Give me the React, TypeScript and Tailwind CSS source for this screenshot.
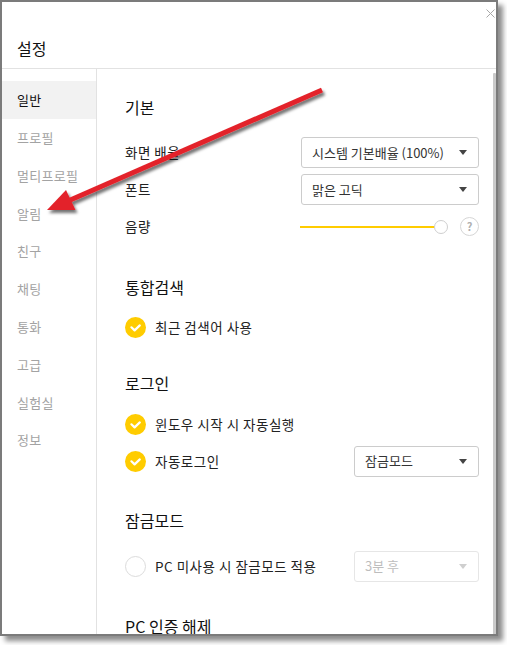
import React from "react";

const menu = ["일반", "프로필", "멀티프로필", "알림", "친구", "채팅", "통화", "고급", "실험실", "정보"];

function Caret({ disabled }: { disabled?: boolean }) {
  return (
    <span
      className={
        disabled
          ? "w-0 h-0 border-l-[4.5px] border-r-[4.5px] border-t-[5px] border-l-transparent border-r-transparent border-t-[#cfcfcf]"
          : "w-0 h-0 border-l-[4.5px] border-r-[4.5px] border-t-[5px] border-l-transparent border-r-transparent border-t-[#444]"
      }
    />
  );
}

function Select({ value, wide, disabled }: { value: string; wide?: boolean; disabled?: boolean }) {
  return (
    <div
      className={[
        "ml-auto h-[31px] flex items-center justify-between rounded-[3px] border pl-[10px] pr-[11px] text-[13px]",
        wide ? "w-[178px]" : "w-[125px]",
        disabled ? "border-[#e6e6e6] text-[#bdbdbd]" : "border-[#cccccc] text-[#333]",
      ].join(" ")}
    >
      <span>{value}</span>
      <Caret disabled={disabled} />
    </div>
  );
}

function Check({ on }: { on: boolean }) {
  if (!on) {
    return <span className="w-[21px] h-[21px] rounded-full border border-[#dcdcdc] bg-white shrink-0" />;
  }
  return (
    <svg width="21" height="21" viewBox="0 0 21 21" className="shrink-0">
      <circle cx="10.5" cy="10.5" r="10.5" fill="#ffcc00" />
      <path
        d="M6.4 10.3 L9.6 13.4 L14.8 8.4"
        stroke="#fff"
        strokeWidth="2.2"
        fill="none"
        strokeLinecap="round"
        strokeLinejoin="round"
      />
    </svg>
  );
}

function CheckRow({ label, on, children }: { label: string; on: boolean; children?: React.ReactNode }) {
  return (
    <div className="h-[37px] flex items-center">
      <Check on={on} />
      <span className="ml-[9px] text-[13.5px] tracking-[0.5px] text-[#222]">{label}</span>
      {children}
    </div>
  );
}

function Heading({ children, className }: { children: React.ReactNode; className: string }) {
  return <div className={`h-[24px] leading-[24px] text-[16px] text-[#111] ${className}`}>{children}</div>;
}

export default function App() {
  return (
    <div
      className="relative w-[507px] h-[645px] bg-white overflow-hidden"
      style={{ fontFamily: '"Noto Sans CJK KR", "Noto Sans", sans-serif' }}
    >
      <div className="w-[498px] h-[636px] border-2 border-[#7b7b7b] bg-white flex flex-col shadow-[5px_5px_5px_rgba(0,0,0,0.45)]">
        {/* Header */}
        <div className="relative h-[67px] shrink-0 border-b border-[#e2e2e2] pl-[15px] pt-[34px]">
          <div className="h-[24px] leading-[24px] text-[16px] text-[#111]">설정</div>
          <svg width="9" height="9" viewBox="0 0 9 9" className="absolute right-[1px] top-[7px]">
            <path d="M0.5 0.5 L8.5 8.5 M8.5 0.5 L0.5 8.5" stroke="#a8a8a8" strokeWidth="1" />
          </svg>
        </div>

        {/* Body */}
        <div className="flex-1 flex min-h-0">
          <div className="w-[95px] shrink-0 border-r border-[#e2e2e2] pt-[12px]">
            {menu.map((m, i) => (
              <div
                key={m}
                className={
                  i === 0
                    ? "h-[37.8px] flex items-center pl-[15px] text-[13px] tracking-[0.3px] bg-[#f2f2f2] text-[#111]"
                    : "h-[37.8px] flex items-center pl-[15px] text-[13px] tracking-[0.3px] text-[#a3a3a3]"
                }
              >
                {m}
              </div>
            ))}
          </div>

          <div className="flex-1 min-w-0 overflow-hidden pl-[28px] pr-[14px]">
            <Heading className="mt-[26px]">기본</Heading>
            <div className="mt-[15px]">
              <div className="h-[37px] flex items-center">
                <span className="text-[13.5px] tracking-[0.5px] text-[#222]">화면 배율</span>
                <Select value="시스템 기본배율 (100%)" wide />
              </div>
              <div className="h-[37px] flex items-center">
                <span className="text-[13.5px] tracking-[0.5px] text-[#222]">폰트</span>
                <Select value="맑은 고딕" wide />
              </div>
              <div className="h-[37px] flex items-center">
                <span className="text-[13.5px] tracking-[0.5px] text-[#222]">음량</span>
                <div className="ml-auto relative w-[148px] h-[14px]">
                  <div className="absolute left-0 right-[8px] top-[6px] h-[2px] bg-[#ffcc00]" />
                  <div className="absolute right-0 top-0 w-[14px] h-[14px] rounded-full border border-[#cfcfcf] bg-white" />
                </div>
                <div className="ml-[12px] w-[19px] h-[19px] rounded-full border border-[#d6d6d6] flex items-center justify-center text-[11px] font-bold text-[#b0b0b0] leading-none">
                  ?
                </div>
              </div>
            </div>

            <Heading className="mt-[30px]">통합검색</Heading>
            <div className="mt-[10px]">
              <CheckRow label="최근 검색어 사용" on />
            </div>

            <Heading className="mt-[25px]">로그인</Heading>
            <div className="mt-[10.5px]">
              <CheckRow label="윈도우 시작 시 자동실행" on />
              <CheckRow label="자동로그인" on>
                <Select value="잠금모드" />
              </CheckRow>
            </div>

            <Heading className="mt-[28.5px]">잠금모드</Heading>
            <div className="mt-[15.5px]">
              <CheckRow label="PC 미사용 시 잠금모드 적용" on={false}>
                <Select value="3분 후" disabled />
              </CheckRow>
            </div>

            <Heading className="mt-[29.5px]">PC 인증 해제</Heading>
          </div>

          {/* Scrollbar */}
          <div className="w-[3px] shrink-0 flex flex-col">
            <div className="mt-[4px] flex-1 bg-[#cacaca] rounded-t-[1px]" />
          </div>
        </div>
      </div>

      {/* Annotation arrow */}
      <svg className="absolute left-0 top-0 pointer-events-none" width="507" height="645" viewBox="0 0 507 645">
        <defs>
          <filter id="arrowShadow" x="-10%" y="-10%" width="130%" height="140%">
            <feDropShadow dx="2" dy="3" stdDeviation="1.6" floodColor="#000" floodOpacity="0.55" />
          </filter>
        </defs>
        <g filter="url(#arrowShadow)">
          <line x1="322" y1="90" x2="68" y2="201" stroke="#e3242b" strokeWidth="5" />
          <polygon points="47,210 66,190 75.5,210" fill="#e3242b" />
        </g>
      </svg>
    </div>
  );
}
